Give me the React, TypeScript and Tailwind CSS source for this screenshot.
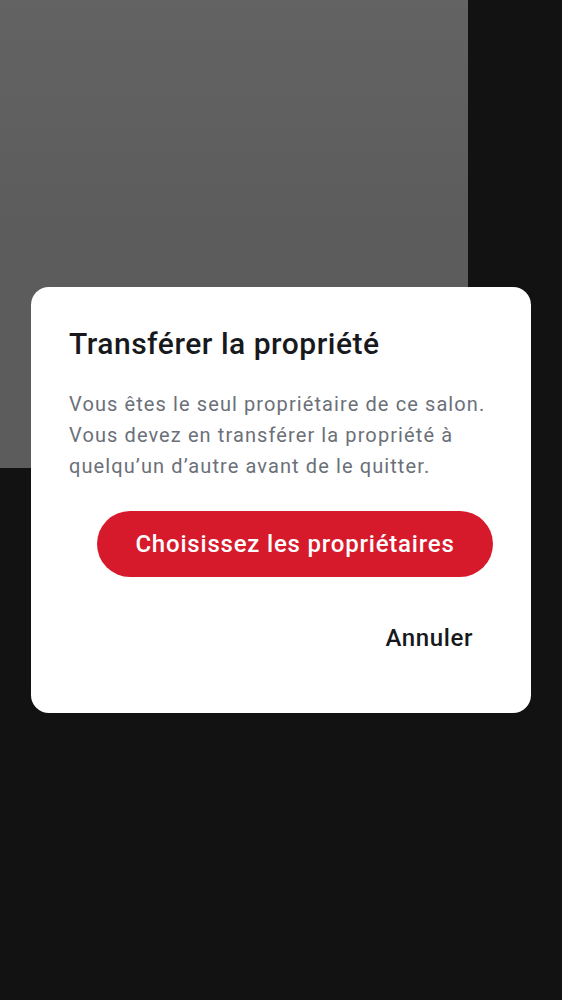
import React from 'react';

export default function App() {
  return (
    <div
      className="relative h-[1000px] w-full overflow-hidden bg-[#121212]"
      style={{ fontFamily: 'Roboto, "Noto Sans", sans-serif' }}
    >
      <div className="h-[468px] w-[468px] bg-gradient-to-b from-[#636363] via-[#5c5c5c] to-[#5c5c5c]" />

      <div className="absolute left-[31px] top-[287px] flex w-[500px] flex-col rounded-[18px] bg-white px-[38px] pt-[39px] pb-[51px]">
        <h2 className="text-[30px] leading-[36px] font-medium tracking-[0.5px] text-[#17191c]">
          Transférer la propriété
        </h2>
        <p className="mt-[27px] text-[20px] leading-[31px] tracking-[1.1px] text-[#6b7079]">
          Vous êtes le seul propriétaire de ce salon. Vous devez en transférer la propriété à
          quelqu’un d’autre avant de le quitter.
        </p>
        <div className="mt-[29px] flex justify-end">
          <button className="h-[66px] w-[396px] rounded-full bg-[#d71a2b] text-[24px] font-medium tracking-[0.8px] text-white">
            Choisissez les propriétaires
          </button>
        </div>
        <div className="mt-[37px] flex justify-end">
          <button className="flex h-[48px] items-center px-[20px] text-[24px] font-medium tracking-[0.6px] text-[#17191c]">
            Annuler
          </button>
        </div>
      </div>
    </div>
  );
}
